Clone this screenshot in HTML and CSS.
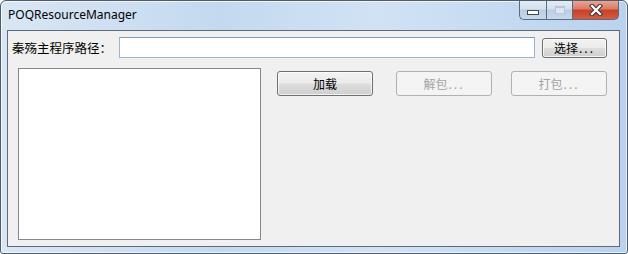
FILE: index.html
```html
<!DOCTYPE html>
<html lang="zh-CN">
<head>
    <meta charset="UTF-8">
    <title>POQResourceManager</title>
    <link rel="stylesheet" href="styles.css">
</head>
<body>
    <div class="window">
        <div class="titlebar">
            <span class="title">POQResourceManager</span>
            <div class="controls">
                <div class="ctl ctl-min"><span class="min-bar"></span></div>
                <div class="ctl ctl-max"><span class="max-box"></span></div>
                <div class="ctl ctl-close">
                    <svg width="14" height="12" viewBox="0 0 14 12">
                        <path d="M3 2 L11 10 M11 2 L3 10" stroke="#3b3b3b" stroke-width="4.4" stroke-linecap="square"/>
                        <path d="M3 2 L11 10 M11 2 L3 10" stroke="#ffffff" stroke-width="2.2" stroke-linecap="square"/>
                    </svg>
                </div>
            </div>
        </div>
        <div class="client">
            <div class="path-row">
                <label class="path-label">秦殇主程序路径：</label>
                <input class="path-input" type="text">
                <button class="btn btn-browse">选择<span class="dots">...</span></button>
            </div>
            <div class="main-row">
                <div class="listbox"></div>
                <div class="actions">
                    <button class="btn btn-action">加载</button>
                    <button class="btn btn-action btn-unpack" disabled>解包<span class="dots">...</span></button>
                    <button class="btn btn-action btn-pack" disabled>打包<span class="dots">...</span></button>
                </div>
            </div>
        </div>
    </div>
</body>
</html>
```

FILE: styles.css
```css
html, body {
    margin: 0;
    padding: 0;
    background: #ffffff;
}
body {
    font-family: "Noto Sans CJK SC", "Noto Sans", sans-serif;
    font-size: 12px;
    color: #000000;
}
.window {
    box-sizing: border-box;
    width: 628px;
    height: 254px;
    display: flex;
    flex-direction: column;
    border: 1px solid #4d5b6b;
    border-radius: 6px 6px 3px 3px;
    background: linear-gradient(to right, #d9e6f4 0%, #c4d9ef 35%, #d1e2f4 60%, #bad2ee 100%);
    padding: 0 7px 6px 6px;
    box-shadow: inset 0 0 0 1px rgba(255, 255, 255, 0.7);
}
.titlebar {
    height: 29px;
    display: flex;
    align-items: flex-start;
    justify-content: space-between;
}
.title {
    font-family: "Noto Sans", "Liberation Sans", sans-serif;
    font-size: 12px;
    margin: 6px 0 0 1px;
    line-height: 16px;
}
.controls {
    display: flex;
    margin-right: 1px;
    height: 19px;
}
.ctl {
    box-sizing: border-box;
    height: 19px;
    display: flex;
    align-items: center;
    justify-content: center;
    border: 1px solid #5b6b7e;
    border-top: none;
}
.ctl-min {
    width: 27px;
    border-radius: 0 0 0 5px;
    border-right: none;
    background: linear-gradient(to bottom, #e3ecf6 0%, #d3e0ef 45%, #b9cde3 50%, #c9d9eb 100%);
}
.ctl-max {
    width: 26px;
    border-right: none;
    background: linear-gradient(to bottom, #e3ecf6 0%, #d3e0ef 45%, #b9cde3 50%, #c9d9eb 100%);
}
.ctl-close {
    width: 47px;
    border-radius: 0 0 5px 0;
    background: linear-gradient(to bottom, #e7a595 0%, #dc7a64 45%, #c5402a 50%, #d55c40 100%);
}
.min-bar {
    width: 10px;
    height: 3px;
    margin-top: 5px;
    background: #ffffff;
    border: 1px solid #404a55;
}
.max-box {
    box-sizing: border-box;
    width: 10px;
    height: 8px;
    border: 1px solid #b7c7d9;
    border-top-width: 2px;
    background: #dfe8f2;
}
.client {
    flex: 1;
    background: #f0f0f0;
    border: 1px solid #5f6b78;
    padding: 6px 12px 0 4px;
}
.path-row {
    display: flex;
    align-items: center;
    height: 21px;
}
.path-label {
    width: 107px;
    font-size: 12.5px;
    line-height: 16px;
}
.path-input {
    box-sizing: border-box;
    flex: 1;
    height: 21px;
    margin: 0;
    border: 1px solid #9cb5cf;
    border-top-color: #7d9bbb;
    background: #ffffff;
    outline: none;
}
.btn {
    box-sizing: border-box;
    margin: 0;
    padding: 0;
    font-family: "Noto Sans CJK SC", "Noto Sans", sans-serif;
    font-size: 12px;
    color: #000000;
    border: 1px solid #707070;
    border-radius: 3px;
    background: linear-gradient(to bottom, #f2f2f2 0%, #ebebeb 48%, #dddddd 52%, #cfcfcf 100%);
    box-shadow: inset 0 0 0 1px rgba(255, 255, 255, 0.75);
}
.dots {
    letter-spacing: 2px;
    margin-left: 1px;
}
.btn-browse {
    width: 65px;
    height: 20px;
    margin-left: 7px;
    line-height: 16px;
}
.main-row {
    display: flex;
    align-items: flex-start;
    margin-top: 10px;
    padding-left: 6px;
}
.listbox {
    box-sizing: border-box;
    width: 243px;
    height: 172px;
    background: #ffffff;
    border: 1px solid #828790;
}
.actions {
    display: flex;
    margin: 3px 0 0 16px;
}
.btn-action {
    width: 96px;
    height: 25px;
}
.btn-action:disabled {
    color: #a3a3a3;
    border-color: #adb2b5;
    background: #f4f4f4;
    box-shadow: none;
}
.btn-unpack {
    margin-left: 23px;
}
.btn-pack {
    margin-left: 19px;
}
```
